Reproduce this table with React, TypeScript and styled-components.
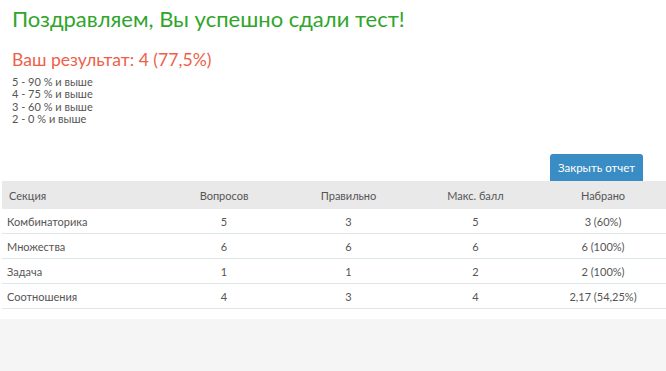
import React from 'react';
import styled, { createGlobalStyle } from 'styled-components';

const GRADES = [
  '5 - 90 % и выше',
  '4 - 75 % и выше',
  '3 - 60 % и выше',
  '2 - 0 % и выше',
];

const COLUMNS = [
  { title: 'Секция', width: 160, align: 'left' as const },
  { title: 'Вопросов', width: 124, align: 'center' as const },
  { title: 'Правильно', width: 125, align: 'center' as const },
  { title: 'Макс. балл', width: 129, align: 'center' as const },
  { title: 'Набрано', width: 126, align: 'center' as const },
];

const ROWS = [
  ['Комбинаторика', '5', '3', '5', '3 (60%)'],
  ['Множества', '6', '6', '6', '6 (100%)'],
  ['Задача', '1', '1', '2', '2 (100%)'],
  ['Соотношения', '4', '3', '4', '2,17 (54,25%)'],
];

const App: React.FC = () => (
  <Page>
    <GlobalStyle />
    <Report>
      <Intro>
        <Title>Поздравляем, Вы успешно сдали тест!</Title>
        <Score>Ваш результат: 4 (77,5%)</Score>
        <GradeList>
          {GRADES.map(g => (
            <div key={g}>{g}</div>
          ))}
        </GradeList>
      </Intro>
      <Toolbar>
        <CloseButton>Закрыть отчет</CloseButton>
      </Toolbar>
      <Table>
        <colgroup>
          {COLUMNS.map(c => (
            <col key={c.title} style={{ width: c.width }} />
          ))}
        </colgroup>
        <thead>
          <tr>
            {COLUMNS.map(c => (
              <HeadCell key={c.title} $align={c.align}>
                {c.title}
              </HeadCell>
            ))}
          </tr>
        </thead>
        <tbody>
          {ROWS.map(row => (
            <tr key={row[0]}>
              {row.map((value, i) => (
                <Cell key={i} $align={COLUMNS[i].align}>
                  {value}
                </Cell>
              ))}
            </tr>
          ))}
        </tbody>
      </Table>
    </Report>
    <Footer />
  </Page>
);

export default App;

// Elements

const GlobalStyle = createGlobalStyle`
  html, body {
    margin: 0;
    padding: 0;
    background: #fff;
  }
  body {
    font-family: Lato, 'Open Sans', sans-serif;
  }
`;

const Page = styled.div`
  display: flex;
  flex-direction: column;
  min-height: 371px;
`;

const Report = styled.div`
  padding: 0 0 10px 2px;
`;

const Intro = styled.div`
  padding: 6px 0 0 10px;
`;

const Title = styled.h1`
  margin: 0;
  font-size: 22px;
  font-weight: 400;
  line-height: 26px;
  color: #2fa52b;
`;

const Score = styled.div`
  margin-top: 18px;
  font-size: 17.6px;
  line-height: 20px;
  color: #ee5f4a;
`;

const GradeList = styled.div`
  margin-top: 6px;
  font-size: 11px;
  line-height: 12.3px;
  color: #555;
`;

const Toolbar = styled.div`
  display: flex;
  justify-content: flex-end;
  margin-top: 29px;
  padding-right: 23px;
`;

const CloseButton = styled.button`
  height: 27px;
  width: 93px;
  padding: 0;
  border: 0;
  border-radius: 3px 3px 0 0;
  background: #3a8dc4;
  color: #fff;
  font-family: inherit;
  font-size: 11.5px;
  cursor: pointer;
`;

const Table = styled.table`
  width: 664px;
  border-collapse: collapse;
  table-layout: fixed;
  font-size: 11px;
  color: #555;
`;

const HeadCell = styled.th<{ $align: 'left' | 'center' }>`
  height: 28px;
  padding: 0 7px;
  background: #e9e9e9;
  font-weight: 400;
  text-align: ${({ $align }) => $align};
`;

const Cell = styled.td<{ $align: 'left' | 'center' }>`
  height: 24px;
  padding: 0 5px;
  border-bottom: 1px solid #dde7e7;
  text-align: ${({ $align }) => $align};
`;

const Footer = styled.div`
  flex: 1;
  background: #f5f5f5;
`;
